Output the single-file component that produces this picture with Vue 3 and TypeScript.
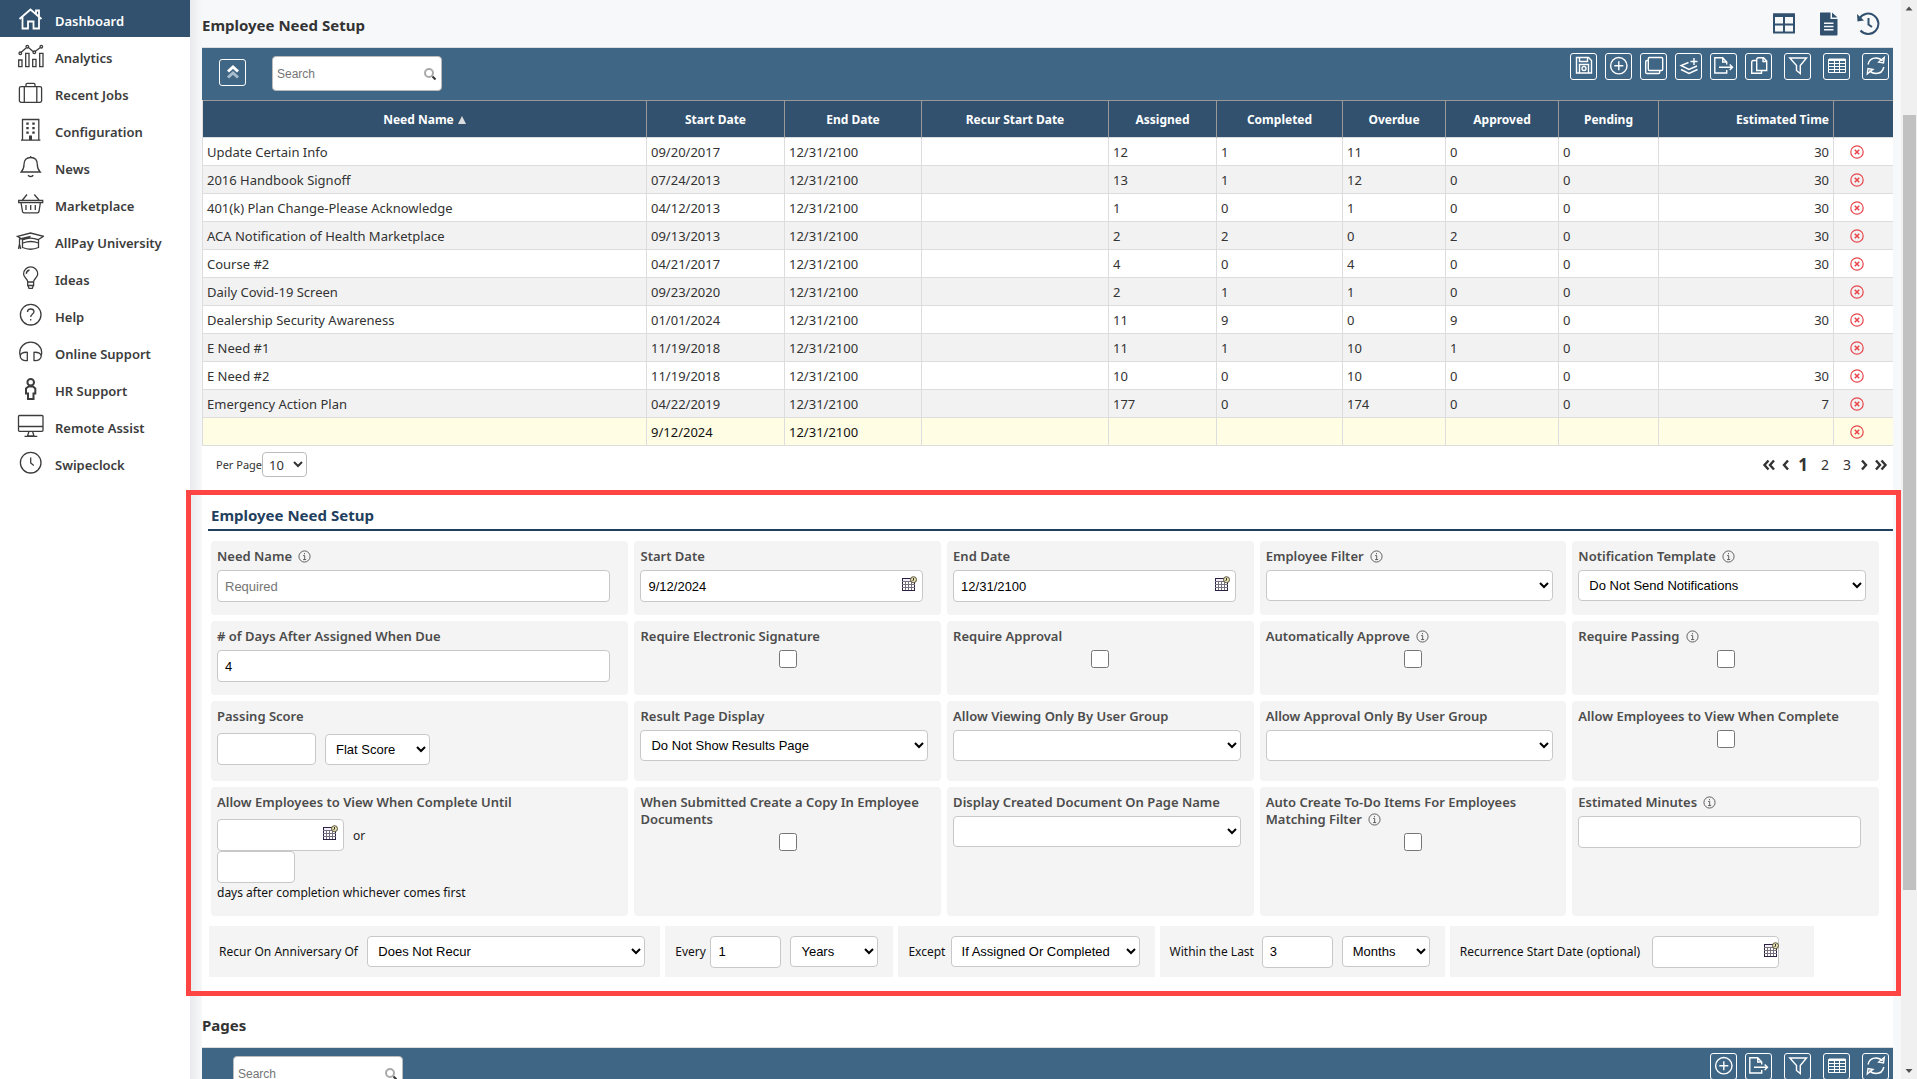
<script setup lang="ts">
import { ref } from 'vue'

interface Icon {
  stroke?: string
  fill?: string
}

interface NavItem {
  label: string
  icon: Icon
  bold?: boolean
}

interface Column {
  label: string
  width?: number
  end?: boolean
}

const navItems: NavItem[] = [
  { label: 'Dashboard', icon: { stroke: 'M3.5 14L14.5 4.5 25.5 14M6.5 12V23.5H12V16.5H17.5V23.5H23V12M20 9V5.5H23V11.5' } },
  {
    label: 'Analytics',
    icon: {
      stroke:
        'M5.3 10.3L10.3 5.7M12.5 5.6L17 9.4M19.4 9.3L24.3 5.6M5.6 11.3A1.3 1.3 0 1 1 3 11.3 1.3 1.3 0 1 1 5.6 11.3M12.6 4.7A1.3 1.3 0 1 1 10 4.7 1.3 1.3 0 1 1 12.6 4.7M19.6 10.3A1.3 1.3 0 1 1 17 10.3 1.3 1.3 0 1 1 19.6 10.3M26.6 4.7A1.3 1.3 0 1 1 24 4.7 1.3 1.3 0 1 1 26.6 4.7M2.7 18H6V24.7H2.7ZM9.7 11.3H13V24.7H9.7ZM16.7 17.3H20V24.7H16.7ZM23.7 11.3H27V24.7H23.7Z',
    },
  },
  { label: 'Recent Jobs', icon: { stroke: 'M5 7.7H24A1.6 1.6 0 0 1 25.6 9.3V21.7A1.6 1.6 0 0 1 24 23.3H5A1.6 1.6 0 0 1 3.4 21.7V9.3A1.6 1.6 0 0 1 5 7.7ZM10 7.7V5.6Q10 4.4 11.2 4.4H17.8Q19 4.4 19 5.6V7.7M8.3 7.7V23.3M20.8 7.7V23.3' } },
  {
    label: 'Configuration',
    icon: {
      stroke: 'M6.5 24V3.5H22.8V24M5 24.2H24.4',
      fill: 'M10.3 6.5h2.4v2.2h-2.4zM16.3 6.5h2.4v2.2h-2.4zM10.3 11h2.4v2.2h-2.4zM16.3 11h2.4v2.2h-2.4zM10.3 15.5h2.4v2.2h-2.4zM16.3 15.5h2.4v2.2h-2.4zM13 19.5h3v4.5h-3z',
    },
  },
  { label: 'News', icon: { stroke: 'M5.2 19Q8 16 8 11.5C8 7 10.5 4.5 14.7 4.5S21.3 7 21.3 11.5Q21.3 16 24.2 19ZM14.7 4.5V3M12 22.3Q14.7 25 17.3 22.3' } },
  { label: 'Marketplace', icon: { stroke: 'M2.7 10.3H26.7V12.5H2.7ZM5 12.5L6.5 21.5Q6.7 22.8 8 22.8H21.5Q22.7 22.8 23 21.5L24.4 12.5M11 4.5L6.5 10M18.3 4.5L23 10M10 15V20M14.7 15V20M19.3 15V20' } },
  { label: 'AllPay University', icon: { stroke: 'M1.5 9.3L14.5 6 27.5 9.3 22 12.7Q14.5 9.5 7 12.7ZM14.5 9.5L3.5 12V17M6.5 12.7V20.5Q14.5 24 22.5 20.5V12.7M7 16Q14.5 13 22.5 16M2.5 22L3.5 17 4.7 22' } },
  { label: 'Ideas', icon: { stroke: 'M11.7 18C11.7 14.5 7.6 14 7.6 10A7 7 0 0 1 21.7 10C21.7 14 17.6 14.5 17.6 18ZM11.7 18V21.5H17.6V18M12 21.5L13 24.4H16.3L17.3 21.5M10.2 9.8A4.5 4.5 0 0 1 13.5 6' } },
  { label: 'Help', icon: { stroke: 'M25 13.7A10.3 10.3 0 1 1 4.4 13.7 10.3 10.3 0 1 1 25 13.7M11.5 11Q11.5 8 14.7 8T18 10.8C18 13 14.7 13 14.7 16M14.7 18V19.6' } },
  { label: 'Online Support', icon: { stroke: 'M4.2 17.5Q3.7 16 3.7 14.5A11 10.3 0 0 1 25.7 14.5Q25.7 16 25.2 17.5M11.3 14.3V22.5C7 23 4.2 21 4.2 18.3S7 14 11.3 14.3ZM18 14.3V22.5C22.3 23 25.2 21 25.2 18.3S22.3 14 18 14.3Z' } },
  { label: 'HR Support', bold: true, icon: { stroke: 'M18 7.3A3.3 3.3 0 1 1 11.4 7.3 3.3 3.3 0 1 1 18 7.3M12.5 11.5H17L19.3 13.5V18.5H17.5V24H12V18.5H10V13.5Z' } },
  { label: 'Remote Assist', icon: { stroke: 'M3.5 3.5H26Q27 3.5 27 4.5V18.3Q27 19.3 26 19.3H3.5Q2.5 19.3 2.5 18.3V4.5Q2.5 3.5 3.5 3.5ZM2.5 14.5H27M13 19.3L11.5 24H18L16.5 19.3M8.5 24.3H21.3' } },
  { label: 'Swipeclock', icon: { stroke: 'M25 13.7A10.3 10.3 0 1 1 4.4 13.7 10.3 10.3 0 1 1 25 13.7M14.7 8.5V14L17.8 16.5' } },
]

const saveIcon: Icon = { stroke: 'M5.5 3.5H17.5L20.5 6.5V19H5.5ZM8.5 3.5V7.5H16.5V3.5M8.5 19V10.5H17.5V19M15 14.5A2 2 0 1 1 11 14.5 2 2 0 1 1 15 14.5' }
const addIcon: Icon = { stroke: 'M21 11.7A8.2 8.2 0 1 1 4.6 11.7 8.2 8.2 0 1 1 21 11.7M12.8 7.2V16.2M8.3 11.7H17.3' }
const windowsIcon: Icon = { stroke: 'M8.5 3.5H20.5Q21.7 3.5 21.7 4.7V15.3Q21.7 16.5 20.5 16.5H8.5Q7.3 16.5 7.3 15.3V4.7Q7.3 3.5 8.5 3.5ZM7.3 6.5H6Q4.7 6.5 4.7 7.7V18.3Q4.7 19.5 6 19.5H17.5Q18.7 19.5 18.7 18.3V16.5' }
const layersIcon: Icon = { stroke: 'M12.5 8.5L5 11.5 13 15.5 21 12M5 15.5L13 19.5 21.5 15.5M18 4V11M14.5 7.5H21.5' }
const exportIcon: Icon = { stroke: 'M15.7 10.5V8L11.7 3.7H3.8V19H15.7V16M11.7 3.7V8H15.7M8 13.3H21.5M18.7 10.5L21.5 13.3 18.7 16' }
const copyIcon: Icon = { stroke: 'M12.5 3.7H17.5L20.7 7V16.5H10.7V5.5Q10.7 3.7 12.5 3.7ZM17 3.7V7.5H20.7M10.7 6.5H7.5Q5.7 6.5 5.7 8.3V19.3H15.5V16.5' }
const filterIcon: Icon = { stroke: 'M4.8 4H21.5L15.3 11.5V19.5L11.5 16.5V11.5Z' }
const gridIcon: Icon = { stroke: 'M4.5 5.5H21.5V18.5H4.5ZM4.5 9.5H21.5M4.5 12.5H21.5M4.5 15.5H21.5M10.5 6V18.500M15.500 6V18.500', fill: 'M5 5H21.500V6.500H5Z' }
const refreshIcon: Icon = { stroke: 'M5 10.5C6 6 9 4 13 4Q17 4 19.5 7M20.8 13C20 17 17 19.5 13 19.5Q9 19.5 6.5 16.5M21.3 3.5L20.5 9 15.7 8ZM4.3 20L5 14.5 10 15.5Z' }

const actions = [
  { label: 'Save', icon: saveIcon },
  { label: 'Add', icon: addIcon },
  { label: 'Duplicate', icon: windowsIcon },
  { label: 'Add layer', icon: layersIcon },
  { label: 'Export', icon: exportIcon },
  { label: 'Copy', icon: copyIcon },
]
const pageActions = [
  { label: 'Add', icon: addIcon },
  { label: 'Export', icon: exportIcon },
]
const viewActions = [
  { label: 'Filter', icon: filterIcon },
  { label: 'Columns', icon: gridIcon },
  { label: 'Refresh', icon: refreshIcon },
]

const columns: Column[] = [
  { label: 'Need Name' },
  { label: 'Start Date', width: 138 },
  { label: 'End Date', width: 137 },
  { label: 'Recur Start Date', width: 187 },
  { label: 'Assigned', width: 108 },
  { label: 'Completed', width: 126 },
  { label: 'Overdue', width: 103 },
  { label: 'Approved', width: 113 },
  { label: 'Pending', width: 100 },
  { label: 'Estimated Time', width: 175, end: true },
  { label: '', width: 60 },
]

const rows: string[][] = [
  ['Update Certain Info', '09/20/2017', '12/31/2100', '', '12', '1', '11', '0', '0', '30'],
  ['2016 Handbook Signoff', '07/24/2013', '12/31/2100', '', '13', '1', '12', '0', '0', '30'],
  ['401(k) Plan Change-Please Acknowledge', '04/12/2013', '12/31/2100', '', '1', '0', '1', '0', '0', '30'],
  ['ACA Notification of Health Marketplace', '09/13/2013', '12/31/2100', '', '2', '2', '0', '2', '0', '30'],
  ['Course #2', '04/21/2017', '12/31/2100', '', '4', '0', '4', '0', '0', '30'],
  ['Daily Covid-19 Screen', '09/23/2020', '12/31/2100', '', '2', '1', '1', '0', '0', ''],
  ['Dealership Security Awareness', '01/01/2024', '12/31/2100', '', '11', '9', '0', '9', '0', '30'],
  ['E Need #1', '11/19/2018', '12/31/2100', '', '11', '1', '10', '1', '0', ''],
  ['E Need #2', '11/19/2018', '12/31/2100', '', '10', '0', '10', '0', '0', '30'],
  ['Emergency Action Plan', '04/22/2019', '12/31/2100', '', '177', '0', '174', '0', '0', '7'],
  ['', '9/12/2024', '12/31/2100', '', '', '', '', '', '', ''],
]

type FieldKind = 'text' | 'date' | 'select' | 'check' | 'score' | 'until'

interface Field {
  id: string
  label: string
  kind: FieldKind
  value?: string
  placeholder?: string
  info?: boolean
}

const fields = ref<Field[]>([
  { id: 'need-name', label: 'Need Name', kind: 'text', value: '', placeholder: 'Required', info: true },
  { id: 'start-date', label: 'Start Date', kind: 'date', value: '9/12/2024' },
  { id: 'end-date', label: 'End Date', kind: 'date', value: '12/31/2100' },
  { id: 'employee-filter', label: 'Employee Filter', kind: 'select', value: '', info: true },
  { id: 'notification', label: 'Notification Template', kind: 'select', value: 'Do Not Send Notifications', info: true },
  { id: 'days-due', label: '# of Days After Assigned When Due', kind: 'text', value: '4' },
  { id: 'signature', label: 'Require Electronic Signature', kind: 'check' },
  { id: 'approval', label: 'Require Approval', kind: 'check' },
  { id: 'auto-approve', label: 'Automatically Approve', kind: 'check', info: true },
  { id: 'require-passing', label: 'Require Passing', kind: 'check', info: true },
  { id: 'score', label: 'Passing Score', kind: 'score' },
  { id: 'result-page', label: 'Result Page Display', kind: 'select', value: 'Do Not Show Results Page' },
  { id: 'view-group', label: 'Allow Viewing Only By User Group', kind: 'select', value: '' },
  { id: 'approve-group', label: 'Allow Approval Only By User Group', kind: 'select', value: '' },
  { id: 'view-complete', label: 'Allow Employees to View When Complete', kind: 'check' },
  { id: 'view-until', label: 'Allow Employees to View When Complete Until', kind: 'until' },
  { id: 'copy-docs', label: 'When Submitted Create a Copy In Employee Documents', kind: 'check' },
  { id: 'page-name', label: 'Display Created Document On Page Name', kind: 'select', value: '' },
  { id: 'auto-todo', label: 'Auto Create To-Do Items For Employees Matching Filter', kind: 'check', info: true },
  { id: 'est-minutes', label: 'Estimated Minutes', kind: 'text', value: '', info: true },
])
</script>

<template>
  <div class="app">
    <nav class="sidebar">
      <a v-for="(item, i) in navItems" :key="item.label" href="#" class="nav-item" :class="{ active: i === 0 }">
        <svg class="nav-icon" :class="{ bold: item.bold }" viewBox="0 0 28 28" aria-hidden="true">
          <path class="line" :d="item.icon.stroke" />
          <path v-if="item.icon.fill" class="solid" :d="item.icon.fill" />
        </svg>
        <span>{{ item.label }}</span>
      </a>
    </nav>

    <main class="main">
      <header class="page-head">
        <h1>Employee Need Setup</h1>
        <div class="head-icons">
          <button type="button" aria-label="Layout">
            <svg viewBox="0 0 24 24"><path d="M2 2.5H22V20.5H2ZM2 12.5H22M12 5V20.5" fill="none" stroke="currentColor" stroke-width="2" /><path d="M1 2.5Q1 1.5 2 1.5H22Q23 1.5 23 2.5V5H1Z" fill="currentColor" /></svg>
          </button>
          <button type="button" aria-label="Report">
            <svg viewBox="0 0 24 24"><path d="M3 1Q3 .5 3.5 .5H13.5V7H20.5V22.5Q20.5 23.5 19.5 23.5H4Q3 23.5 3 22.5ZM15 .5L20.5 5.5H15ZM7 10.5V12H16.5V10.5ZM7 13.7V15.2H16.5V13.7ZM7 17V18.5H16.5V17Z" fill="currentColor" fill-rule="evenodd" /></svg>
          </button>
          <button type="button" aria-label="History">
            <svg viewBox="0 0 24 24"><path d="M3.5 6.5A10.2 10.2 0 1 1 4.5 18.5M12.5 6V12.5L16 15" fill="none" stroke="currentColor" stroke-width="2" /><path d="M1 2L8 8.5 1.5 9.5Z" fill="currentColor" /></svg>
          </button>
        </div>
      </header>

      <section class="panel">
        <div class="toolbar">
          <button type="button" class="tool-btn collapse" aria-label="Collapse">
            <svg viewBox="0 0 25 25"><path d="M8 11.5L13 7 18 11.5" /><path class="dim" d="M8 17.5L13 13 18 17.5" /></svg>
          </button>
          <label class="search">
            <input type="text" placeholder="Search" aria-label="Search needs" />
            <svg viewBox="0 0 14 14" aria-hidden="true"><circle cx="6" cy="6" r="4" fill="none" stroke="#aaa" stroke-width="2" /><path d="M9.5 9.5L12.5 12.5" stroke="#333" stroke-width="2" /></svg>
          </label>
          <div class="tools">
            <button v-for="a in actions" :key="a.label" type="button" class="tool-btn" :aria-label="a.label">
              <svg viewBox="0 0 25 25"><path :d="a.icon.stroke" /></svg>
            </button>
            <button v-for="a in viewActions" :key="a.label" type="button" class="tool-btn spaced" :class="{ thin: a.icon.fill }" :aria-label="a.label">
              <svg viewBox="0 0 25 25"><path :d="a.icon.stroke" /><path v-if="a.icon.fill" class="solid" :d="a.icon.fill" /></svg>
            </button>
          </div>
        </div>

        <table class="grid">
          <colgroup>
            <col v-for="(c, i) in columns" :key="i" :style="c.width ? { width: c.width + 'px' } : undefined" />
          </colgroup>
          <thead>
            <tr>
              <th v-for="(c, i) in columns" :key="i" scope="col" :class="{ end: c.end }">
                {{ c.label }}<svg v-if="i === 0" class="sort" viewBox="0 0 8 8" aria-hidden="true"><path d="M4 0L8 8H0Z" /></svg>
              </th>
            </tr>
          </thead>
          <tbody>
            <tr v-for="(r, i) in rows" :key="i" :class="{ fresh: i === rows.length - 1 }">
              <td v-for="(v, j) in r" :key="j" :class="{ end: j === 9 }">{{ v }}</td>
              <td class="remove">
                <button type="button" aria-label="Delete">
                  <svg viewBox="0 0 14 14"><circle cx="7" cy="7" r="6.2" /><path d="M4.8 4.8L9.2 9.2M9.2 4.8L4.8 9.2" /></svg>
                </button>
              </td>
            </tr>
          </tbody>
        </table>

        <div class="pager">
          <label for="per-page">Per Page</label>
          <select id="per-page" class="per-page">
            <option>10</option>
          </select>
          <div class="pages">
            <button type="button" aria-label="First"><svg viewBox="0 0 14 14"><path d="M6.5 2.5L2.5 7 6.5 11.5M12 2.5L8 7 12 11.5" /></svg></button>
            <button type="button" aria-label="Previous"><svg class="prev" viewBox="0 0 8 14"><path d="M6 2.5L2 7 6 11.5" /></svg></button>
            <a href="#" class="current">1</a>
            <a href="#">2</a>
            <a href="#">3</a>
            <button type="button" aria-label="Next"><svg class="next" viewBox="0 0 8 14"><path d="M2 2.5L6 7 2 11.5" /></svg></button>
            <button type="button" aria-label="Last"><svg viewBox="0 0 14 14"><path d="M2 2.5L6 7 2 11.5M7.5 2.5L11.5 7 7.5 11.5" /></svg></button>
          </div>
        </div>

        <form class="setup" @submit.prevent>
          <h2>Employee Need Setup</h2>
          <div class="fields">
            <div v-for="f in fields" :key="f.id" class="field">
              <label class="field-label" :for="f.id">
                {{ f.label }}
                <svg v-if="f.info" class="info" viewBox="0 0 14 14"><circle cx="7" cy="7" r="6" /><path d="M5.5 6H7.2V10.3M5.5 10.3H8.8" /><path d="M7 3.3V4.6" /></svg>
              </label>
              <input v-if="f.kind === 'text'" :id="f.id" v-model="f.value" type="text" class="box" :placeholder="f.placeholder" />
              <div v-else-if="f.kind === 'date'" class="date">
                <input :id="f.id" v-model="f.value" type="text" class="box" />
                <svg class="cal" viewBox="0 0 16 16"><use href="#calendar" /></svg>
              </div>
              <select v-else-if="f.kind === 'select'" :id="f.id" v-model="f.value" class="box">
                <option>{{ f.value }}</option>
              </select>
              <input v-else-if="f.kind === 'check'" :id="f.id" type="checkbox" class="check" />
              <div v-else-if="f.kind === 'score'" class="pair">
                <input :id="f.id" type="text" class="box score" />
                <select class="box flat" aria-label="Score type">
                  <option>Flat Score</option>
                </select>
              </div>
              <div v-else class="until">
                <div class="until-line">
                  <div class="date short">
                    <input :id="f.id" type="text" class="box" />
                    <svg class="cal" viewBox="0 0 16 16"><use href="#calendar" /></svg>
                  </div>
                  <span>or</span>
                </div>
                <input id="view-days" type="text" class="box days" />
                <label for="view-days" class="plain">days after completion whichever comes first</label>
              </div>
            </div>
          </div>

          <div class="recur">
            <div class="recur-item">
              <label for="recur">Recur On Anniversary Of</label>
              <select id="recur" class="box anniversary"><option>Does Not Recur</option></select>
            </div>
            <div class="recur-item">
              <label for="every">Every</label>
              <input id="every" type="text" class="box count" value="1" />
              <select class="box unit" aria-label="Every unit"><option>Years</option></select>
            </div>
            <div class="recur-item">
              <label for="except">Except</label>
              <select id="except" class="box except"><option>If Assigned Or Completed</option></select>
            </div>
            <div class="recur-item">
              <label for="within">Within the Last</label>
              <input id="within" type="text" class="box count" value="3" />
              <select class="box unit" aria-label="Within unit"><option>Months</option></select>
            </div>
            <div class="recur-item last">
              <label for="recur-start">Recurrence Start Date (optional)</label>
              <div class="date short flush">
                <input id="recur-start" type="text" class="box" />
                <svg class="cal" viewBox="0 0 16 16"><use href="#calendar" /></svg>
              </div>
            </div>
          </div>
        </form>

        <h2 class="pages-title">Pages</h2>
        <div class="toolbar pages-bar">
          <label class="search">
            <input type="text" placeholder="Search" aria-label="Search pages" />
            <svg viewBox="0 0 14 14" aria-hidden="true"><circle cx="6" cy="6" r="4" fill="none" stroke="#aaa" stroke-width="2" /><path d="M9.5 9.5L12.5 12.5" stroke="#333" stroke-width="2" /></svg>
          </label>
          <div class="tools">
            <button v-for="a in pageActions" :key="a.label" type="button" class="tool-btn" :aria-label="a.label">
              <svg viewBox="0 0 25 25"><path :d="a.icon.stroke" /></svg>
            </button>
            <button v-for="a in viewActions" :key="a.label" type="button" class="tool-btn spaced" :class="{ thin: a.icon.fill }" :aria-label="a.label">
              <svg viewBox="0 0 25 25"><path :d="a.icon.stroke" /><path v-if="a.icon.fill" class="solid" :d="a.icon.fill" /></svg>
            </button>
          </div>
        </div>
      </section>
    </main>

    <div class="scrollbar" aria-hidden="true">
      <svg viewBox="0 0 16 16"><path d="M4.5 10.5L8 6.5 11.5 10.5Z" /></svg>
      <div class="track"><div class="thumb"></div></div>
      <svg viewBox="0 0 16 16"><path d="M4.5 6L8 10 11.5 6Z" /></svg>
    </div>

    <svg class="defs" aria-hidden="true">
      <symbol id="calendar" viewBox="0 0 16 16">
        <rect x="1.5" y="2.5" width="12" height="12" fill="#fff" stroke="#2a2140" />
        <path d="M2 4H13" stroke="#e4def0" />
        <path d="M1 5.5H14M1 8.5H14M1 11.5H14M4.5 5V15M7.5 5V15M10.5 5V15" stroke="#77707f" />
        <path d="M1 14.5H14" stroke="#2a2140" />
        <circle cx="12.5" cy="3.7" r="3" fill="#e6dfb0" stroke="#57503a" />
        <path d="M12.5 2V4L11.5 5" fill="none" stroke="#333" />
      </symbol>
    </svg>
  </div>
</template>

<style>
body {
  margin: 0;
  overflow: hidden;
}
</style>

<style scoped>
.app {
  display: flex;
  height: 100vh;
  overflow: hidden;
  background: #f7f8fa;
  color: #333;
  font-family: 'Noto Sans', 'Open Sans', sans-serif;
  font-size: 13px;
}

button {
  padding: 0;
  border: 0;
  background: none;
  color: inherit;
  font: inherit;
}

h1,
h2 {
  margin: 0;
  font-size: 15px;
  font-weight: 700;
}

.defs {
  position: absolute;
  width: 0;
  height: 0;
}

/* Sidebar */
.sidebar {
  flex: none;
  width: 190px;
  background: #fff;
}

.nav-item {
  display: flex;
  align-items: center;
  gap: 11px;
  box-sizing: border-box;
  height: 37px;
  padding-left: 16px;
  color: #3c3c3c;
  font-weight: 600;
  text-decoration: none;
}

.nav-item span {
  padding-top: 5px;
}

.nav-item.active {
  background: #31516f;
  color: #fff;
}

.nav-icon {
  width: 28px;
  height: 28px;
}

.nav-icon .line {
  fill: none;
  stroke: currentColor;
  stroke-width: 1.3;
}

.nav-icon.bold .line {
  stroke-width: 2;
}

.active .line {
  stroke-width: 1.8;
}

.nav-icon .solid {
  fill: currentColor;
}

/* Main column */
.main {
  flex: 1;
  min-width: 0;
  padding: 0 8px 0 12px;
  background: linear-gradient(to right, #e8eaed, #f7f8fa 12px);
}

.page-head {
  display: flex;
  align-items: center;
  justify-content: space-between;
  height: 47px;
  padding-right: 13px;
}

.page-head h1 {
  padding-top: 2px;
}

.head-icons {
  display: flex;
  gap: 15px;
  color: #31516f;
}

.head-icons button:first-child {
  margin-right: 6px;
}

.head-icons svg {
  display: block;
  width: 24px;
  height: 24px;
}

.panel {
  background: #fff;
}

.toolbar {
  display: flex;
  align-items: flex-start;
  box-sizing: border-box;
  height: 53px;
  padding: 5px 4px 0 17px;
  border-top: 1px solid #ddd;
  background: #406686;
}

.tool-btn {
  flex: none;
  box-sizing: border-box;
  width: 27px;
  height: 27px;
  border: 1px solid #fff;
  border-radius: 3px;
}

.tool-btn svg {
  display: block;
  width: 25px;
  height: 25px;
  fill: none;
  stroke: #fff;
  stroke-width: 1.4;
}

.tool-btn.thin svg {
  stroke-width: 1;
}

.tool-btn .solid {
  fill: #fff;
}

.collapse {
  margin: 6px 26px 0 0;
}

.tool-btn.collapse svg {
  stroke-width: 3;
}

.collapse .dim {
  stroke: #a9bccb;
}

.search {
  display: flex;
  align-items: center;
  box-sizing: border-box;
  width: 170px;
  height: 35px;
  margin-top: 3px;
  padding: 0 4px;
  border: 1px solid #bbb;
  border-radius: 4px;
  background: #fff;
}

.search input {
  flex: 1;
  min-width: 0;
  padding: 0;
  border: 0;
  outline: 0;
  font: 12px 'Liberation Sans', Arial, sans-serif;
}

.search svg {
  width: 14px;
  height: 14px;
}

.tools {
  display: flex;
  gap: 8px;
  margin-left: auto;
}

.tool-btn.spaced {
  margin-left: 4px;
}

/* Table */
.grid {
  width: 100%;
  border-left: 1px solid #ddd;
  border-spacing: 0;
  table-layout: fixed;
}

th,
td {
  box-sizing: border-box;
  padding: 0 4px;
  border-bottom: 1px solid #ddd;
  border-left: 1px solid #ddd;
  text-align: left;
  white-space: nowrap;
}

th:first-child,
td:first-child {
  border-left: 0;
}

th {
  height: 38px;
  border-top: 1px solid #999;
  border-left-color: #999;
  background: #31516f;
  color: #fff;
  font-size: 12px;
  font-weight: 700;
  text-align: center;
}

td {
  height: 28px;
}

th.end,
td.end {
  text-align: right;
}

tbody tr:nth-child(even) {
  background: #f2f2f2;
}

tbody tr.fresh {
  background: #fffde3;
  color: #111;
}

.sort {
  width: 8px;
  height: 8px;
  margin-left: 4px;
  fill: #ddd;
}

.remove {
  padding-left: 16px;
}

.remove button,
.remove svg {
  display: block;
  width: 14px;
  height: 14px;
}

.remove svg {
  fill: none;
  stroke: #e8474c;
  stroke-width: 1.2;
}

.remove path {
  stroke-width: 1.6;
}

.pager {
  display: flex;
  align-items: center;
  box-sizing: border-box;
  height: 44px;
  padding: 0 5px 7px 14px;
  font-size: 11px;
}

.per-page {
  width: 45px;
  height: 25px;
  padding: 0 2px;
  border: 1px solid #bbb;
  border-radius: 4px;
  background: #fff;
  color: #333;
  font: 13px 'Noto Sans', 'Open Sans', sans-serif;
}

.pages {
  display: flex;
  align-items: center;
  margin-left: auto;
  font-size: 14px;
}

.pages svg {
  display: block;
  width: 14px;
  height: 14px;
  fill: none;
  stroke: #333;
  stroke-width: 2.4;
}

.pages svg.prev {
  width: 8px;
  margin: 0 2px 0 6px;
}

.pages svg.next {
  width: 8px;
  margin: 0 6px 0 2px;
}

.pages a {
  width: 22px;
  color: #333;
  text-align: center;
  text-decoration: none;
}

.pages .current {
  font-size: 17px;
  font-weight: 700;
}

/* Setup form */
.setup {
  position: relative;
  box-sizing: border-box;
  padding-bottom: 19px;
}

.setup::after {
  position: absolute;
  inset: 0 -8px 0 -16px;
  border: 5px solid #ff4444;
  content: '';
  pointer-events: none;
}

.setup h2 {
  box-sizing: border-box;
  height: 41px;
  margin-left: 6px;
  padding: 14px 0 0 3px;
  border-bottom: 2px solid #1f405e;
  color: #1f405e;
  line-height: 22px;
}

.fields {
  display: grid;
  grid-template-columns: minmax(0, 418fr) repeat(4, minmax(0, 307fr));
  gap: 6px;
  margin: 10px 14px 0 9px;
}

.field {
  padding: 7px 6px 13px;
  border-radius: 4px;
  background: #f4f4f4;
}

.field-label {
  display: block;
  margin-bottom: 5px;
  color: #4c4c4c;
  font-size: 13px;
  font-weight: 600;
  line-height: 17px;
}

.info {
  width: 13px;
  height: 13px;
  margin-left: 3px;
  vertical-align: -2px;
  fill: none;
  stroke: #555;
}

.box {
  display: block;
  box-sizing: border-box;
  width: 100%;
  height: 32px;
  padding: 0 7px;
  border: 1px solid #c8c8c8;
  border-radius: 4px;
  background: #fff;
  color: #000;
  font: 13px 'Liberation Sans', Arial, sans-serif;
}

select.box {
  height: 31px;
  padding: 0 6px;
}

.box::placeholder,
.search input::placeholder {
  color: #757575;
}

.field > input.box,
.field > .date {
  width: calc(100% - 12px);
}

.field > select.box {
  width: calc(100% - 7px);
}

.date {
  position: relative;
}

.cal {
  position: absolute;
  top: 6px;
  right: 6px;
  width: 16px;
  height: 16px;
}

.check {
  display: block;
  width: 18px;
  height: 18px;
  margin: 0 auto;
}

.pair {
  display: flex;
  align-items: flex-end;
  gap: 9px;
  margin: 8px 0 3px;
}

.pair .score {
  width: 99px;
}

.pair .flat {
  width: 105px;
}

.until {
  margin-top: 8px;
}

.until-line {
  display: flex;
  align-items: center;
  gap: 9px;
  color: #222;
  font-size: 12px;
}

.date.short {
  width: 127px;
}

.flush .cal {
  right: 0;
}

.box.days {
  width: 78px;
}

.plain {
  display: block;
  color: #111;
  font-size: 12px;
  line-height: 20px;
}

.recur {
  display: grid;
  grid-template-columns: 451fr 228fr 256fr 285fr 364fr;
  gap: 5px;
  margin: 10px 79px 0 7px;
}

.recur-item {
  display: flex;
  align-items: center;
  box-sizing: border-box;
  height: 51px;
  padding: 0 15px 0 10px;
  background: #f4f4f4;
  color: #111;
  font-size: 12px;
  white-space: nowrap;
}

.recur-item label {
  flex: 1;
}

.recur-item.last {
  padding-right: 35px;
}

.box.anniversary {
  width: 278px;
}

.box.count {
  width: 71px;
  margin-right: 9px;
}

.box.unit {
  width: 88px;
}

.box.except {
  width: 189px;
}

.pages-title {
  height: 51px;
  line-height: 58px;
}

.pages-bar {
  height: 60px;
  padding-left: 31px;
}

/* Scrollbar */
.scrollbar {
  display: flex;
  flex: none;
  flex-direction: column;
  width: 16px;
  background: #f0f0f0;
}

.scrollbar svg {
  width: 16px;
  height: 16px;
  fill: #505050;
}

.track {
  flex: 1;
  padding: 0 1px 0 2px;
}

.thumb {
  height: 74%;
  margin-top: 99px;
  background: #c1c1c1;
}
</style>
